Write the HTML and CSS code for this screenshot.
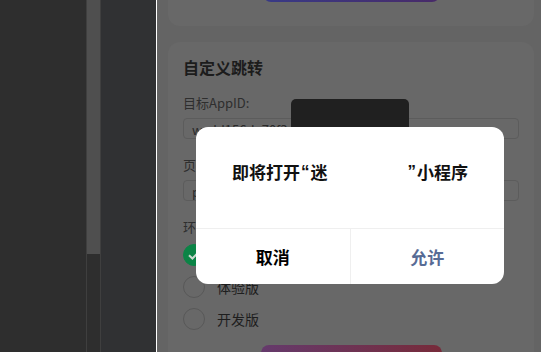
FILE: index.html
```html
<!DOCTYPE html>
<html lang="zh-CN">
<head>
<meta charset="utf-8">
<title>自定义跳转</title>
<link rel="stylesheet" href="styles.css">
</head>
<body>
<div class="app">
  <div class="side"></div>
  <div class="scroll"><div class="thumb"></div></div>
  <div class="panel"></div>
  <div class="edge"></div>
  <div class="phone">
    <div class="content">
      <div class="card card-top">
        <div class="btn btn-blue"></div>
      </div>
      <div class="card card-main">
        <div class="title">自定义跳转</div>
        <div class="label label-first">目标AppID:</div>
        <div class="input">wxdd156de70f3a12b</div>
        <div class="label">页面路径:</div>
        <div class="input">pages/index/index</div>
        <div class="label">环境版本:</div>
        <div class="radios">
          <div class="radio"><span class="dot checked"><svg viewBox="0 0 22 22" width="22" height="22"><path d="M6 11.2l3.4 3.3 6.6-6.8" fill="none" stroke="#c9d9cf" stroke-width="2"/></svg></span><span class="rtext">正式版</span></div>
          <div class="radio"><span class="dot"></span><span class="rtext">体验版</span></div>
          <div class="radio"><span class="dot"></span><span class="rtext">开发版</span></div>
        </div>
        <div class="btn btn-red"></div>
      </div>
    </div>
    <div class="toast"></div>
    <div class="dialog">
      <div class="dialog-body"><span>即将打开</span><span class="q">“</span><span>迷</span><span class="hide"></span><span class="q">”</span><span>小程序</span></div>
      <div class="dialog-foot">
        <div class="action cancel">取消</div>
        <div class="action ok">允许</div>
      </div>
    </div>
  </div>
</div>
</body>
</html>
```
FILE: styles.css
```css
html, body {
  margin: 0;
  padding: 0;
}
body {
  width: 541px;
  height: 352px;
  overflow: hidden;
  font-family: "Noto Sans CJK SC", "Noto Sans", sans-serif;
}
.app {
  display: flex;
  height: 352px;
}
.side {
  width: 86px;
  background: #2e2e2e;
}
.scroll {
  width: 13px;
  border-left: 1px solid #3f3f3f;
  border-right: 1px solid #3f3f3f;
  background: #2e2e2e;
}
.thumb {
  height: 254px;
  background: #4f4f4f;
}
.panel {
  width: 55px;
  background: #303133;
}
.edge {
  width: 1px;
  background: #ffffff;
}
.phone {
  flex: 1;
  position: relative;
  overflow: hidden;
  background: #646464;
  padding: 0 7px 0 11px;
}
.content {
  margin-top: -42px;
  display: flex;
  flex-direction: column;
  gap: 16px;
}
.card {
  background: #686868;
  border-radius: 12px;
}
.card-top {
  padding-bottom: 24px;
  display: flex;
  justify-content: center;
}
.btn {
  border-radius: 8px;
  height: 44px;
}
.btn-blue {
  width: 177px;
  background: linear-gradient(to right, #383a86, #482a68);
}
.card-main {
  padding: 15px;
  display: flex;
  flex-direction: column;
}
.title {
  font-size: 16px;
  line-height: 20px;
  font-weight: 700;
  color: #1c1c1c;
}
.label {
  font-size: 13px;
  line-height: 19px;
  color: #2e2e2e;
  margin-top: 16px;
  margin-bottom: 6px;
}
.input {
  height: 21px;
  box-sizing: border-box;
  border: 1px solid #5c5c5c;
  border-radius: 4px;
  padding: 0 8px;
  font-size: 13px;
  line-height: 21px;
  color: #2a2a2a;
  white-space: nowrap;
  overflow: hidden;
}
.radios {
  margin-top: 2px;
  display: flex;
  flex-direction: column;
  gap: 10px;
}
.radio {
  display: flex;
  align-items: center;
  height: 22px;
}
.dot {
  width: 22px;
  height: 22px;
  box-sizing: border-box;
  border: 1px solid #585858;
  border-radius: 50%;
  margin-right: 12px;
  display: flex;
}
.dot.checked {
  background: #0b8446;
  border-color: #0b8446;
}
.dot svg {
  margin: -1px;
}
.rtext {
  font-size: 14px;
  color: #1e1e1e;
}
.btn-red {
  align-self: center;
  width: 181px;
  margin-top: 15px;
  background: linear-gradient(to right, #653a6c, #772b3a);
}
.toast {
  position: absolute;
  left: 134px;
  top: 99px;
  width: 118px;
  height: 118px;
  border-radius: 5px;
  background: #202020;
}
.dialog {
  position: absolute;
  left: 39px;
  top: 127px;
  width: 308px;
  height: 157px;
  background: #ffffff;
  border-radius: 12px;
  display: flex;
  flex-direction: column;
  overflow: hidden;
}
.dialog-body {
  flex: 1;
  display: flex;
  justify-content: center;
  padding-top: 32px;
  font-size: 17px;
  line-height: 26px;
  font-weight: 700;
  color: #111111;
  white-space: nowrap;
}
.q {
  font-family: "Liberation Sans", sans-serif;
  padding: 0 1px;
}
.hide {
  display: inline-block;
  width: 79px;
}
.dialog-foot {
  height: 55px;
  border-top: 1px solid #efefef;
  display: flex;
}
.action {
  flex: 1;
  display: flex;
  align-items: center;
  justify-content: center;
  font-size: 17px;
  font-weight: 700;
  color: #000000;
}
.action.ok {
  border-left: 1px solid #efefef;
  color: #576b95;
}
```
